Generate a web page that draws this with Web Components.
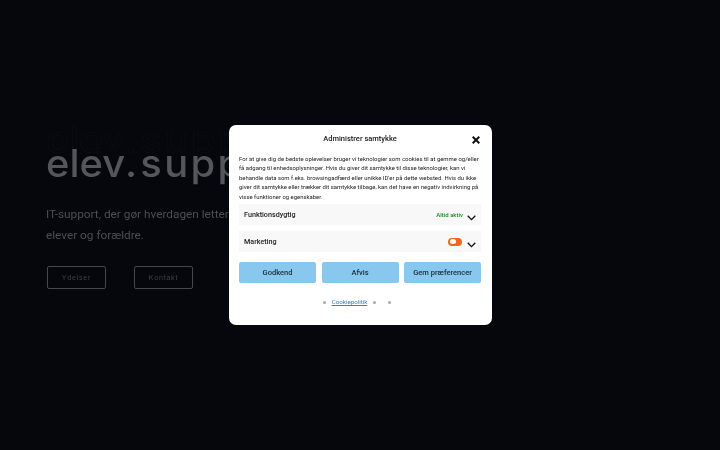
<!DOCTYPE html>
<html lang="da"><head><meta charset="utf-8"><title>elev.support</title>
<style>
html,body{margin:0;height:100%;background:#05070c;overflow:hidden}
</style></head><body>
<hero-section></hero-section>
<consent-modal>
  <consent-row label="Funktionsdygtig"><span slot="status" style="color:#1f8a1f;font-size:6px;font-weight:500">Altid aktiv</span></consent-row>
  <consent-row label="Marketing"><consent-toggle slot="status" style="margin-right:1px"></consent-toggle></consent-row>
</consent-modal>
<script>
function def(name,html){
  customElements.define(name,class extends HTMLElement{
    constructor(){super();this.attachShadow({mode:'open'}).innerHTML=html}
    connectedCallback(){
      const l=this.shadowRoot.querySelector('[data-label]');
      if(l) l.textContent=this.getAttribute('label')||'';
    }
  });
}
def('hero-section',`<style>
:host{display:block;width:720px;height:450px;box-sizing:border-box;padding:120px 0 0 46px;overflow:hidden;font-family:Roboto,sans-serif;color:#55575c;filter:blur(.35px)}
.stack{display:grid;width:400px;height:65px}
h1{grid-area:1/1;margin:0;font:500 38px/1 Inter,sans-serif;white-space:nowrap;letter-spacing:0;transform-origin:0 0;transform:scaleX(1.05)}
h1 b{font-weight:inherit;letter-spacing:3px}
h1 span{letter-spacing:2.2px}
.ghost{color:transparent;-webkit-text-stroke:.6px #0d0f14}
.main{color:#54565a;margin-top:24px}
p{margin:19px 0 0;font-size:11.8px;line-height:21px;color:#4c4e53;width:420px}
.btns{display:flex;gap:28px;margin-top:20px;padding-left:1px}
a{width:57px;height:21px;border:1px solid #45474c;border-radius:2px;display:flex;align-items:center;justify-content:center;font:500 7px "Liberation Sans",sans-serif;letter-spacing:.8px;color:#3f4146}
</style>
<div class="stack"><h1 class="ghost">elev<b>.</b><span>support</span></h1><h1 class="main">elev<b>.</b><span>support</span></h1></div>
<p>IT-support, der gør hverdagen lettere for skoler,<br>elever og forældre.</p>
<div class="btns"><a>Ydelser</a><a>Kontakt</a></div>`);

def('consent-toggle',`<style>
:host{display:block;width:14px;height:8px;border-radius:4px;background:#f0681e;position:relative;top:.5px}
i{position:absolute;left:1.5px;top:1.5px;width:6px;height:5px;border-radius:2.5px;background:#fff}
</style><i></i>`);

def('consent-row',`<style>
:host{display:flex;align-items:center;height:21px;background:#f8f8f8;padding:0 5px;font:500 7.2px Roboto,sans-serif;color:#1c1c1c;position:relative}
.l{flex:1}
.s{margin-right:13px;margin-top:-1px;display:flex}
svg{position:absolute;right:5px;top:11px}
</style><span class="l" data-label></span><span class="s"><slot name="status"></slot></span>
<svg width="9" height="6" viewBox="0 0 9 6" fill="none" stroke="#111" stroke-width="1.3"><path d="M.7 .8 4.5 4.6 8.3 .8"/></svg>`);

def('consent-btn',`<style>
:host{flex:1;height:21px;background:#88c7ee;border-radius:2px;display:flex;align-items:center;justify-content:center;font:500 7.5px Roboto,sans-serif;color:#1b2c38}
</style><slot></slot>`);

def('consent-modal',`<style>
:host{position:absolute;left:228.5px;top:125px;width:263px;height:200px;box-sizing:border-box;background:#fff;border-radius:7px;padding:0 10.5px;display:flex;flex-direction:column;font-family:Roboto,sans-serif;color:#1c1c1c;filter:blur(.3px)}
header{height:27px;display:flex;align-items:center;justify-content:center;font-size:7.5px;font-weight:500;position:relative}
svg.x{position:absolute;right:1px;top:11px}
p{margin:2px 0 3px;font-size:5.95px;line-height:9.4px;color:#222;white-space:nowrap}
.rows{display:flex;flex-direction:column;gap:6px}
.btns{display:flex;gap:5.5px;margin-top:10px}
footer{display:flex;justify-content:center;align-items:center;margin-top:15px;padding-right:6px;font-size:6.2px}
i{width:3px;height:3px;border-radius:50%;background:#aaa}
a{color:#3b7fb8;text-decoration:underline;margin:0 6px}
i+i{margin-left:12px}
</style>
<header>Administrer samtykke<svg class="x" width="8" height="8" viewBox="0 0 8 8" stroke="#111" stroke-width="2"><path d="M.7 .7 7.3 7.3M7.3 .7 .7 7.3"/></svg></header>
<p>For at give dig de bedste oplevelser bruger vi teknologier som cookies til at gemme og/eller<br>få adgang til enhedsoplysninger. Hvis du giver dit samtykke til disse teknologier, kan vi<br>behandle data som f.eks. browsingadfærd eller unikke ID'er på dette websted. Hvis du ikke<br>giver dit samtykke eller trækker dit samtykke tilbage, kan det have en negativ indvirkning på<br>visse funktioner og egenskaber.</p>
<div class="rows"><slot></slot></div>
<div class="btns"><consent-btn>Godkend</consent-btn><consent-btn>Afvis</consent-btn><consent-btn>Gem præferencer</consent-btn></div>
<footer><i></i><a>Cookiepolitik</a><i></i><i></i></footer>`);
</script>
</body></html>
